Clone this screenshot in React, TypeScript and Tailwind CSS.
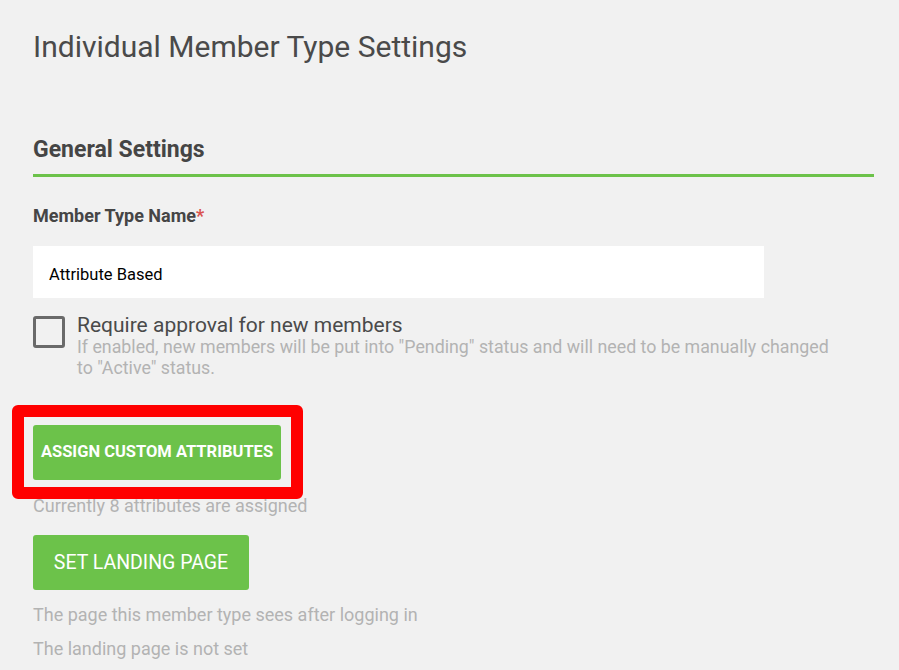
import React from "react";

export default function App() {
  return (
    <div className="min-h-[670px] w-full bg-[#f1f1f1] font-['Roboto',sans-serif] text-[#454545]">
      <div className="pl-[33px] pr-[25px] pt-[27px]">
        <h1 className="text-[30px] leading-[40px] font-normal text-[#4a4a4a]">
          Individual Member Type Settings
        </h1>
        <div className="mt-[69px] border-b-[3px] border-[#6cc24a] pb-[10px]">
          <h2 className="text-[23px] leading-[28px] font-bold text-[#454545]">General Settings</h2>
        </div>
        <div className="mt-[28px] text-[18px] leading-[22px] font-bold text-[#454545]">
          Member Type Name<span className="text-[#d9534f]">*</span>
        </div>
        <div className="mt-[19px] flex h-[52px] w-[731px] items-center bg-white pl-[16px] pt-[6px] text-[16.5px] text-black">
          Attribute Based
        </div>
        <div className="mt-[18px] flex gap-[12px]">
          <div className="h-[32px] w-[32px] shrink-0 rounded-[3px] border-[3px] border-[#6a6a6a]" />
          <div className="-mt-[2px]">
            <div className="text-[21px] leading-[22px] text-[#4a4a4a]">Require approval for new members</div>
            <div className="w-[765px] text-[17.8px] leading-[21px] text-[#b3b3b3]">
              If enabled, new members will be put into "Pending" status and will need to be manually changed to "Active" status.
            </div>
          </div>
        </div>
        <div className="relative mt-[47px] w-fit">
          <button className="flex h-[55px] w-[248px] items-center justify-center rounded-[3px] bg-[#6cc24a] text-[16.5px] font-bold text-white">
            ASSIGN CUSTOM ATTRIBUTES
          </button>
          <div className="pointer-events-none absolute left-[-21px] top-[-20px] h-[94px] w-[291px] rounded-[6px] border-[12px] border-[#ff0000]" />
        </div>
        <div className="mt-[15px] text-[18px] leading-[22px] text-[#b3b3b3]">Currently 8 attributes are assigned</div>
        <button className="mt-[18px] flex h-[55px] w-[216px] items-center justify-center rounded-[3px] bg-[#6cc24a] text-[19.5px] text-white">
          SET LANDING PAGE
        </button>
        <div className="mt-[14px] text-[18px] leading-[22px] text-[#b3b3b3]">The page this member type sees after logging in</div>
        <div className="mt-[12px] text-[18px] leading-[22px] text-[#b3b3b3]">The landing page is not set</div>
      </div>
    </div>
  );
}
